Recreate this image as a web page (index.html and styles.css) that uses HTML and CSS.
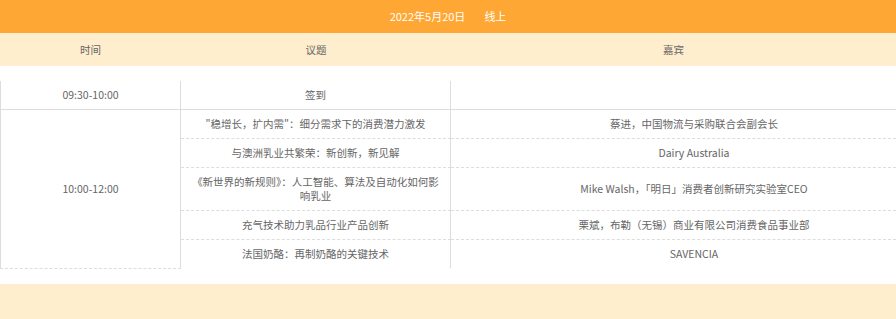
FILE: index.html
```html
<!DOCTYPE html>
<html lang="zh-CN">
<head>
<meta charset="utf-8">
<title>议程</title>
<link rel="stylesheet" href="styles.css">
</head>
<body>
<div class="day">2022年5月20日<span class="place">线上</span></div>
<div class="thead">
  <div class="th">时间</div>
  <div class="th">议题</div>
  <div class="th">嘉宾</div>
</div>
<div class="agenda">
  <div class="cell time solid">09:30-10:00</div>
  <div class="cell topic solid">签到</div>
  <div class="cell guest solid"></div>

  <div class="cell time span5">10:00-12:00</div>
  <div class="cell topic">"稳增长，扩内需"：细分需求下的消费潜力激发</div>
  <div class="cell guest">蔡进，中国物流与采购联合会副会长</div>
  <div class="cell topic">与澳洲乳业共繁荣：新创新，新见解</div>
  <div class="cell guest">Dairy Australia</div>
  <div class="cell topic">《新世界的新规则》：人工智能、算法及自动化如何影响乳业</div>
  <div class="cell guest">Mike Walsh，「明日」消费者创新研究实验室CEO</div>
  <div class="cell topic">充气技术助力乳品行业产品创新</div>
  <div class="cell guest">栗斌，布勒（无锡）商业有限公司消费食品事业部</div>
  <div class="cell topic last">法国奶酪：再制奶酪的关键技术</div>
  <div class="cell guest last">SAVENCIA</div>
</div>
<div class="next"></div>
</body>
</html>
```

FILE: styles.css
```css
html, body {
  margin: 0;
  padding: 0;
  background: #ffffff;
}

body {
  font-family: "Noto Sans CJK SC", "Microsoft YaHei", sans-serif;
  font-size: 10.5px;
  color: #666666;
}

.day {
  height: 33px;
  line-height: 33px;
  background: #ffa735;
  color: #ffffff;
  text-align: center;
  font-size: 11px;
}

.place {
  margin-left: 19px;
}

.thead {
  display: grid;
  grid-template-columns: 181px 270px 1fr;
  height: 33px;
  background: #ffeecd;
}

.th {
  line-height: 33px;
  text-align: center;
}

.agenda {
  display: grid;
  grid-template-columns: 181px 270px 1fr;
  margin-top: 15px;
}

.cell {
  padding: 7px 6px;
  line-height: 14px;
  text-align: center;
  border-bottom: 1px dashed #dddddd;
  display: flex;
  align-items: center;
  justify-content: center;
}

.cell.solid {
  border-bottom-style: solid;
}

.time {
  border-left: 1px solid #dddddd;
  border-right: 1px solid #dddddd;
}

.topic {
  border-right: 1px solid #dddddd;
}

.guest {
  padding-left: 47px;
}

.span5 {
  grid-row: span 5;
}

.cell.last {
  border-bottom-color: transparent;
}

.next {
  margin-top: 15px;
  height: 35px;
  background: #ffeecd;
}
```
